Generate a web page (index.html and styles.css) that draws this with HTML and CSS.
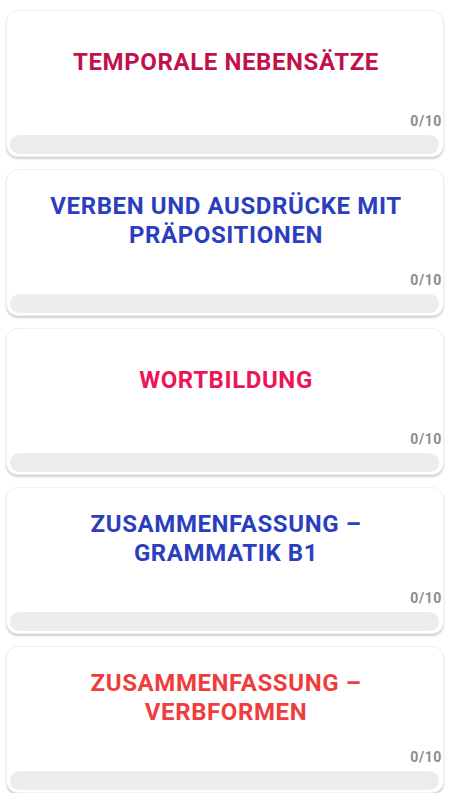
FILE: index.html
```html
<!DOCTYPE html>
<html lang="de">
<head>
    <meta charset="UTF-8">
    <meta name="viewport" content="width=device-width, initial-scale=1.0">
    <title>Grammatik B1</title>
    <link rel="stylesheet" href="styles.css">
</head>
<body>
    <div class="list">
        <div class="card">
            <div class="title crimson">TEMPORALE NEBENSÄTZE</div>
            <div class="count">0/10</div>
            <div class="bar"></div>
        </div>
        <div class="card">
            <div class="title blue">VERBEN UND AUSDRÜCKE MIT PRÄPOSITIONEN</div>
            <div class="count">0/10</div>
            <div class="bar"></div>
        </div>
        <div class="card">
            <div class="title pink">WORTBILDUNG</div>
            <div class="count">0/10</div>
            <div class="bar"></div>
        </div>
        <div class="card">
            <div class="title blue">ZUSAMMENFASSUNG – GRAMMATIK B1</div>
            <div class="count">0/10</div>
            <div class="bar"></div>
        </div>
        <div class="card">
            <div class="title red">ZUSAMMENFASSUNG – VERBFORMEN</div>
            <div class="count">0/10</div>
            <div class="bar"></div>
        </div>
    </div>
</body>
</html>
```

FILE: styles.css
```css
body {
    margin: 0;
    background-color: #fff;
    font-family: Roboto, "Liberation Sans", sans-serif;
}
.list {
    padding: 10px 6px 0;
    display: flex;
    flex-direction: column;
    gap: 12px;
}
.card {
    background-color: #fff;
    border: 1px solid #f0f0f0;
    border-radius: 12px;
    box-shadow: 0 2px 2px rgba(0, 0, 0, 0.18);
    padding: 0 1px 2px 3px;
}
.title {
    height: 102px;
    display: flex;
    align-items: center;
    justify-content: center;
    text-align: center;
    font-size: 24px;
    font-weight: bold;
    letter-spacing: 0.6px;
    line-height: 29px;
    padding: 0 30px;
}
.crimson { color: #c0114a; }
.blue { color: #2b3fbe; }
.pink { color: #ec1558; }
.red { color: #ef3d3d; }
.count {
    text-align: right;
    font-size: 14px;
    font-weight: bold;
    letter-spacing: 0.6px;
    color: #8c8c8c;
    line-height: 17px;
    margin-bottom: 5px;
}
.bar {
    height: 19px;
    margin-right: 3px;
    background-color: #edeceb;
    border-radius: 10px;
}
```
